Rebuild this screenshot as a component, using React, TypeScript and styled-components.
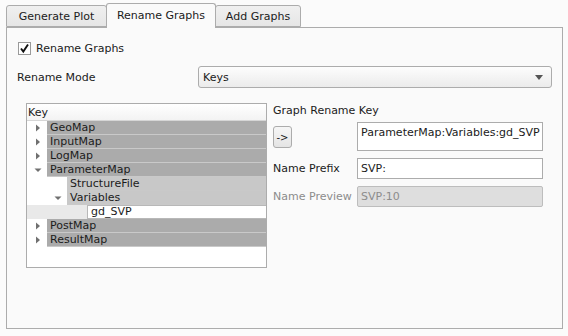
import React from 'react';
import styled, { createGlobalStyle } from 'styled-components';

const GlobalStyle = createGlobalStyle`
  html, body {
    margin: 0;
    padding: 0;
    background: #fbfbfb;
  }
  body {
    font-family: 'DejaVu Sans', 'Liberation Sans', sans-serif;
    font-size: 11px;
    color: #1b1b1b;
  }
`;

interface TreeItem {
  label: string;
  level: number;
  expander?: 'open' | 'closed';
  current?: boolean;
}

const treeItems: TreeItem[] = [
  { label: 'GeoMap', level: 0, expander: 'closed' },
  { label: 'InputMap', level: 0, expander: 'closed' },
  { label: 'LogMap', level: 0, expander: 'closed' },
  { label: 'ParameterMap', level: 0, expander: 'open' },
  { label: 'StructureFile', level: 1 },
  { label: 'Variables', level: 1, expander: 'open' },
  { label: 'gd_SVP', level: 2, current: true },
  { label: 'PostMap', level: 0, expander: 'closed' },
  { label: 'ResultMap', level: 0, expander: 'closed' },
];

const Expander = ({ state }: { state?: 'open' | 'closed' }) => {
  if (!state) return null;
  return (
    <svg width="8" height="8" viewBox="0 0 8 8">
      {state === 'closed' ? (
        <polygon points="2,0.5 6,4 2,7.5" fill="#707070" />
      ) : (
        <polygon points="0.5,2.5 7.5,2.5 4,6" fill="#707070" />
      )}
    </svg>
  );
};

const App: React.FC = () => {
  return (
    <Window>
      <GlobalStyle />
      <TabBar>
        <Tab $width={101}>Generate Plot</Tab>
        <Tab $width={110} $active>Rename Graphs</Tab>
        <Tab $width={86}>Add Graphs</Tab>
      </TabBar>
      <Panel>
        <CheckRow>
          <CheckBox>
            <svg width="11" height="11" viewBox="0 0 11 11">
              <path d="M2 5.5 L4.3 8.5 L9 1.5" stroke="#111" strokeWidth="1.9" fill="none" />
            </svg>
          </CheckBox>
          <span>Rename Graphs</span>
        </CheckRow>
        <ModeRow>
          <ModeLabel>Rename Mode</ModeLabel>
          <Combo>
            <span>Keys</span>
            <svg width="8" height="5" viewBox="0 0 8 5">
              <polygon points="0,0 8,0 4,5" fill="#555" />
            </svg>
          </Combo>
        </ModeRow>
        <Lower>
          <Tree>
            <TreeHeader>Key</TreeHeader>
            {treeItems.map(item => (
              <TreeRow key={item.label} $current={item.current}>
                <Indent $level={item.level}>
                  <ExpanderSlot>
                    <Expander state={item.expander} />
                  </ExpanderSlot>
                </Indent>
                <TreeCell $level={item.level} $current={item.current}>
                  {item.label}
                </TreeCell>
              </TreeRow>
            ))}
          </Tree>
          <Form>
            <FormTitle>Graph Rename Key</FormTitle>
            <KeyRow>
              <ArrowButton>-&gt;</ArrowButton>
              <KeyArea>ParameterMap:Variables:gd_SVP</KeyArea>
            </KeyRow>
            <FieldRow>
              <Label>Name Prefix</Label>
              <Input>SVP:</Input>
            </FieldRow>
            <FieldRow>
              <Label $disabled>Name Preview</Label>
              <Input $disabled>SVP:10</Input>
            </FieldRow>
          </Form>
        </Lower>
      </Panel>
    </Window>
  );
};

export default App;

const Window = styled.div`
  width: 568px;
  height: 336px;
  padding: 4px 5px 0 6px;
  box-sizing: border-box;
  background: #fbfbfb;
  white-space: nowrap;
`;

const TabBar = styled.div`
  display: flex;
  align-items: flex-end;
  height: 24px;
  position: relative;
  z-index: 1;
  margin-bottom: -1px;
`;

const Tab = styled.div<{ $active?: boolean; $width: number }>`
  width: ${p => p.$width}px;
  height: ${p => (p.$active ? 25 : 22)}px;
  margin-bottom: ${p => (p.$active ? 0 : 1)}px;
  box-sizing: border-box;
  display: flex;
  align-items: center;
  justify-content: center;
  padding-bottom: ${p => (p.$active ? 2 : 0)}px;
  font-size: 11px;
  border: 1px solid #acacac;
  border-bottom: ${p => (p.$active ? 'none' : '1px solid #acacac')};
  border-radius: 3px 3px 0 0;
  background: ${p => (p.$active ? '#fafafa' : 'linear-gradient(#f0f0f0, #e6e6e6)')};
  & + & {
    margin-left: -1px;
  }
`;

const Panel = styled.div`
  width: 557px;
  height: 302px;
  box-sizing: border-box;
  border: 1px solid #acacac;
  background: #fafafa;
  padding: 12px 10px 0 10px;
  display: flex;
  flex-direction: column;
`;

const CheckRow = styled.div`
  display: flex;
  align-items: center;
  gap: 5px;
  height: 16px;
  padding-left: 1px;
  font-size: 11px;
`;

const CheckBox = styled.div`
  width: 13px;
  height: 13px;
  box-sizing: border-box;
  border: 1px solid #9a9a9a;
  background: #fff;
  display: flex;
  align-items: center;
  justify-content: center;
`;

const ModeRow = styled.div`
  display: flex;
  align-items: center;
  margin-top: 10px;
  height: 22px;
`;

const Label = styled.div<{ $disabled?: boolean }>`
  font-size: 11px;
  color: ${p => (p.$disabled ? '#8c8c8c' : '#1b1b1b')};
  width: 84px;
  flex-shrink: 0;
`;

const ModeLabel = styled(Label)`
  width: 181px;
`;

const Combo = styled.div`
  width: 354px;
  height: 22px;
  box-sizing: border-box;
  border: 1px solid #acacac;
  border-radius: 3px;
  background: linear-gradient(#fdfdfd, #ebebeb);
  display: flex;
  align-items: center;
  justify-content: space-between;
  padding: 0 8px 0 4px;
  font-size: 11px;
`;

const Lower = styled.div`
  display: flex;
  margin-top: 15px;
  margin-left: 9px;
  gap: 6px;
`;

const Tree = styled.div`
  width: 241px;
  height: 165px;
  box-sizing: border-box;
  border: 1px solid #acacac;
  background: #fff;
  display: flex;
  flex-direction: column;
`;

const TreeHeader = styled.div`
  height: 17px;
  box-sizing: border-box;
  border-bottom: 1px solid #d6d6d6;
  padding-left: 1px;
  font-size: 11px;
  line-height: 17px;
  background: linear-gradient(#ffffff, #f3f3f3);
`;

const TreeRow = styled.div<{ $current?: boolean }>`
  display: flex;
  height: 14px;
  background: ${p => (p.$current ? '#e9e9e9' : '#fff')};
`;

const Indent = styled.div<{ $level: number }>`
  width: ${p => 20 + p.$level * 20}px;
  flex-shrink: 0;
  display: flex;
  justify-content: flex-end;
`;

const ExpanderSlot = styled.div`
  width: 16px;
  display: flex;
  align-items: center;
  padding-left: 3px;
  box-sizing: border-box;
`;

const TreeCell = styled.div<{ $level: number; $current?: boolean }>`
  flex: 1;
  box-sizing: border-box;
  padding-left: 3px;
  font-size: 11px;
  line-height: 14px;
  background: ${p =>
    p.$current ? '#fff' : p.$level === 0 ? '#ababab' : '#c8c8c8'};
  border-bottom: 1px solid ${p => (p.$current ? '#b8b8b8' : '#c9c9c9')};
  ${p => (p.$current ? 'border-left: 1px solid #b8b8b8; border-top: 1px solid #b8b8b8; line-height: 12px;' : '')}
`;

const Form = styled.div`
  display: flex;
  flex-direction: column;
`;

const FormTitle = styled.div`
  font-size: 11px;
  height: 15px;
  line-height: 15px;
`;

const KeyRow = styled.div`
  display: flex;
  align-items: flex-start;
  margin-top: 4px;
`;

const ArrowButton = styled.div`
  width: 19px;
  height: 22px;
  margin-top: 4px;
  box-sizing: border-box;
  border: 1px solid #acacac;
  border-radius: 3px;
  background: linear-gradient(#f6f6f6, #e4e4e4);
  font-size: 10px;
  display: flex;
  align-items: center;
  justify-content: center;
  margin-right: 65px;
`;

const KeyArea = styled.div`
  width: 186px;
  height: 29px;
  box-sizing: border-box;
  border: 1px solid #acacac;
  background: #fff;
  padding: 2px 3px;
  font-size: 11px;
  line-height: 15px;
`;

const FieldRow = styled.div`
  display: flex;
  align-items: center;
  margin-top: 7px;
`;

const Input = styled.div<{ $disabled?: boolean }>`
  width: 186px;
  height: 21px;
  box-sizing: border-box;
  border: 1px solid ${p => (p.$disabled ? '#bdbdbd' : '#acacac')};
  border-radius: ${p => (p.$disabled ? '2px' : '0')};
  background: ${p => (p.$disabled ? '#dedede' : '#fff')};
  color: ${p => (p.$disabled ? '#8c8c8c' : '#1b1b1b')};
  padding: 0 3px;
  font-size: 11px;
  display: flex;
  align-items: center;
`;
